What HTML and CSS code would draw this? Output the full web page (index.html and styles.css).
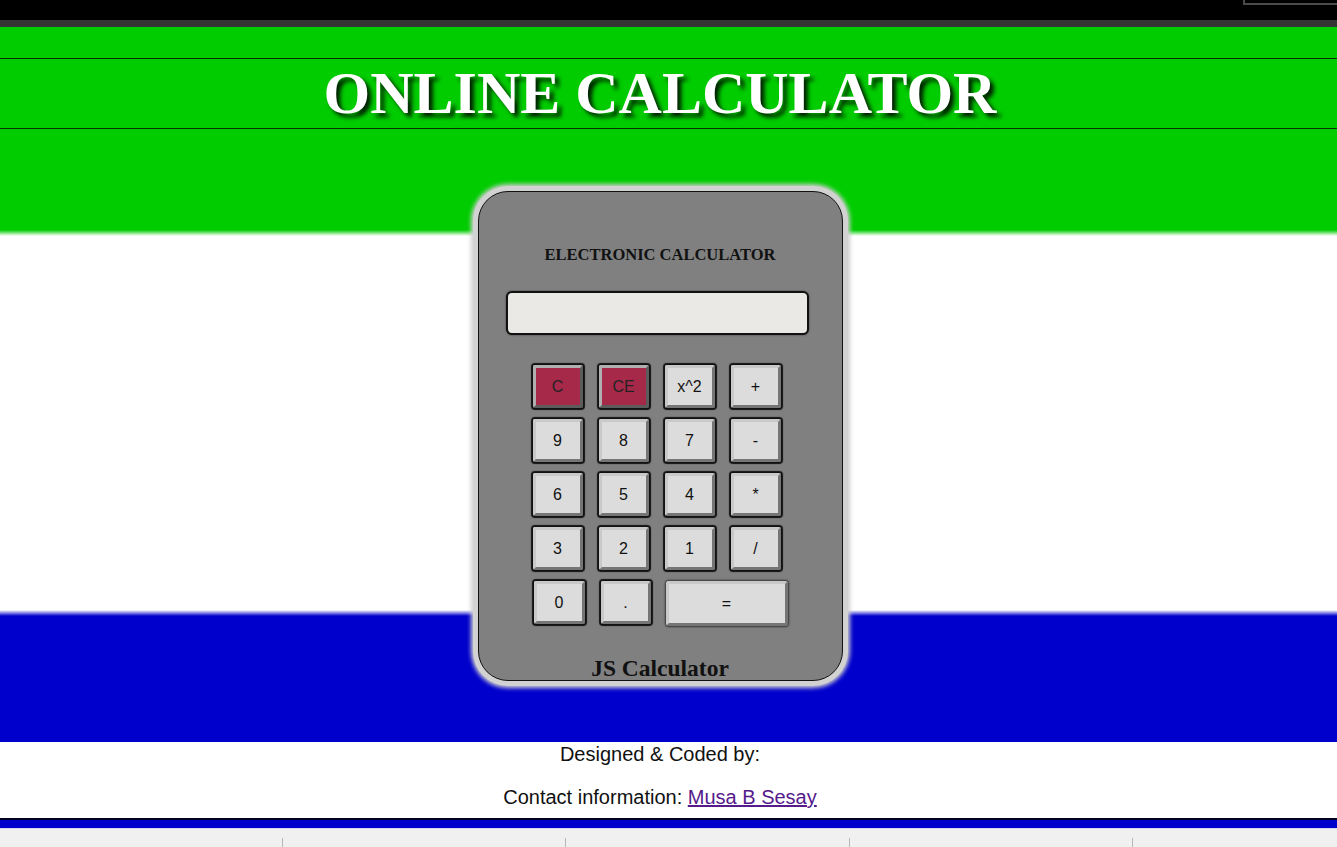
FILE: index.html
```html
<!DOCTYPE html>
<html lang="en">
<head>
<meta charset="utf-8">
<title>Online Calculator</title>
<link rel="stylesheet" href="styles.css">
</head>
<body>
<div class="topbar"><div class="tab"></div></div>
<div class="topline"></div>
<main class="main">
  <h1 class="page-title"><span class="page-title-text">ONLINE CALCULATOR</span></h1>
  <div class="calc-wrap">
    <div class="calc">
      <div class="calc-title">ELECTRONIC CALCULATOR</div>
      <div class="display"></div>
      <div class="keys">
        <div class="row">
          <button class="key key-red">C</button>
          <button class="key key-red">CE</button>
          <button class="key">x^2</button>
          <button class="key">+</button>
        </div>
        <div class="row">
          <button class="key">9</button>
          <button class="key">8</button>
          <button class="key">7</button>
          <button class="key">-</button>
        </div>
        <div class="row">
          <button class="key">6</button>
          <button class="key">5</button>
          <button class="key">4</button>
          <button class="key">*</button>
        </div>
        <div class="row">
          <button class="key">3</button>
          <button class="key">2</button>
          <button class="key">1</button>
          <button class="key">/</button>
        </div>
        <div class="row row-last">
          <button class="key key-zero">0</button>
          <button class="key key-dot">.</button>
          <button class="key-eq">=</button>
        </div>
      </div>
      <div class="calc-foot">JS Calculator</div>
    </div>
  </div>
</main>
<footer class="footer">
  <p class="credit">Designed &amp; Coded by:</p>
  <p class="contact">Contact information: <a class="contact-link" href="#">Musa B Sesay</a></p>
</footer>
<div class="bottombar"></div>
<div class="statusbar">
  <div class="cell"></div>
  <div class="cell cell-sep"></div>
  <div class="cell cell-sep"></div>
  <div class="cell cell-sep"></div>
  <div class="cell cell-sep"></div>
</div>
</body>
</html>
```

FILE: styles.css
```css
html, body {
  margin: 0;
  padding: 0;
}
body {
  background: #fff;
  font-family: "Liberation Sans", Arial, sans-serif;
  overflow: hidden;
  height: 847px;
}
.topbar {
  height: 20px;
  background: #000;
  display: flex;
  justify-content: flex-end;
}
.tab {
  width: 92px;
  height: 3px;
  border-left: 2px solid #4a4a4a;
  border-bottom: 2px solid #4a4a4a;
}
.topline {
  height: 7px;
  background: #353535;
}
.main {
  height: 715px;
  box-sizing: border-box;
  padding-top: 31px;
  background: linear-gradient(to bottom,
    #00cc00 0px, #00cc00 203px, #fff 209px,
    #fff 583px, #0000cc 589px, #0000cc 100%);
}
.page-title {
  margin: 0;
  padding-right: 17px;
  border-top: 1px solid #083008;
  border-bottom: 1px solid #083008;
  text-align: center;
  font-family: "Liberation Serif", "Times New Roman", serif;
  font-weight: bold;
  font-size: 60px;
  line-height: 69px;
  color: #fff;
  text-shadow: 4px 4px 4px rgba(0, 0, 0, 0.85);
}
.calc-wrap {
  padding-right: 17px;
  padding-top: 62px;
  display: flex;
  justify-content: center;
}
.calc {
  width: 365px;
  height: 490px;
  box-sizing: border-box;
  background: #808080;
  border: 1px solid #111;
  border-radius: 30px;
  box-shadow: 0 0 0 5px #d2d2d2, 0 0 4px 7px #cfcfcf;
  display: flex;
  flex-direction: column;
}
.calc > * {
  flex-shrink: 0;
}
.calc-title {
  margin-top: 53px;
  text-align: center;
  font-family: "Liberation Serif", "Times New Roman", serif;
  font-weight: bold;
  font-size: 16.5px;
  line-height: 20px;
  color: #111;
}
.display {
  margin-top: 26px;
  margin-left: 27px;
  width: 303px;
  height: 44px;
  box-sizing: border-box;
  background: #ebe9e5;
  border: 2px solid #111;
  border-radius: 6px;
  box-shadow: 0 0 2px rgba(0, 0, 0, 0.6);
}
.keys {
  margin-top: 28px;
  margin-left: 52px;
  display: flex;
  flex-direction: column;
  gap: 7px;
}
.row {
  display: flex;
  gap: 12px;
  height: 47px;
  flex-shrink: 0;
}
.key {
  margin: 2px;
  width: 50px;
  height: 43px;
  box-sizing: border-box;
  padding: 0;
  background: #dcdcdc;
  border: 3px outset #c9c9c9;
  border-radius: 2px;
  box-shadow: 0 0 1px 2px #111;
  font-family: "Liberation Sans", Arial, sans-serif;
  font-size: 16px;
  color: #111;
}
.key-red {
  background: #a6294a;
  border-color: #b0b0b0;
  color: #222;
}
.row-last {
  padding-left: 1px;
}
.key-zero {
  width: 51px;
}
.key-dot {
  width: 50px;
}
.key-eq {
  margin-top: 2px;
  margin-left: 1px;
  width: 122px;
  height: 45px;
  box-sizing: border-box;
  padding: 0;
  background: #dcdcdc;
  border: 3px outset #c9c9c9;
  border-radius: 3px;
  box-shadow: 0 0 2px 1px #333;
  font-family: "Liberation Sans", Arial, sans-serif;
  font-size: 16px;
  color: #111;
}
.calc-foot {
  margin-top: 29px;
  text-align: center;
  font-family: "Liberation Serif", "Times New Roman", serif;
  font-weight: bold;
  font-size: 23.5px;
  line-height: 27px;
  color: #111;
}
.footer {
  height: 76px;
  box-sizing: border-box;
  padding-top: 1px;
  padding-right: 17px;
  text-align: center;
  font-size: 20px;
  line-height: 23px;
  color: #111;
}
.credit {
  margin: 0;
}
.contact {
  margin: 20px 0 0;
}
.contact-link {
  color: #551a8b;
}
.bottombar {
  height: 8px;
  background: #0000cc;
  border-top: 2px solid #000022;
  border-bottom: 1px solid #d6d6f2;
}
.statusbar {
  height: 20px;
  background: #f0f0f0;
  display: grid;
  grid-template-columns: 282px 283px 284px 283px 283px;
  overflow: hidden;
}
.cell-sep {
  margin-top: 9px;
  border-left: 1px solid #b8b8b8;
}
```
